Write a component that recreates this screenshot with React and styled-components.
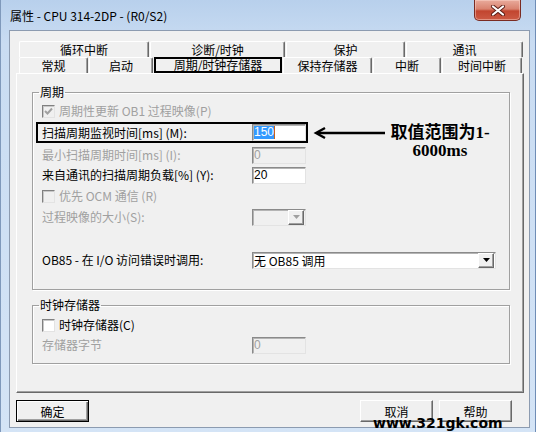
import React from 'react';
import styled, { createGlobalStyle } from 'styled-components';

const UI_FONT = `"Noto Sans CJK SC", "Liberation Sans", sans-serif`;

const GlobalStyle = createGlobalStyle`
  html, body {
    margin: 0;
    padding: 0;
    background: #fff;
  }
  * {
    box-sizing: border-box;
  }
`;

const Window = styled.div`
  position: relative;
  width: 536px;
  height: 432px;
  display: flex;
  flex-direction: column;
  background: linear-gradient(180deg, #b8d0ec 0%, #c9dcf2 10%, #d4e4f6 100%);
  border-left: 1px solid #7f99bb;
  border-right: 1px solid #6f8db6;
  overflow: hidden;
  font-family: ${UI_FONT};
  font-size: 12px;
  color: #000;
`;

const TitleBar = styled.div`
  height: 30px;
  flex: none;
  display: flex;
  align-items: flex-start;
  padding-left: 9px;
`;

const TitleText = styled.div`
  margin-top: 8px;
  line-height: 16px;
  font-size: 12px;
  white-space: nowrap;
`;

const CloseButton = styled.div`
  margin-left: auto;
  margin-right: 14px;
  width: 47px;
  height: 21px;
  display: flex;
  align-items: center;
  justify-content: center;
  border: 1px solid #7a2b22;
  border-top: none;
  border-radius: 0 0 5px 5px;
  background: linear-gradient(180deg, #e9ab9c 0%, #d9826f 45%, #c2452f 55%, #cc5a44 100%);
  box-shadow: inset 0 0 0 1px rgba(255, 220, 210, 0.45);
`;

const Client = styled.div`
  flex: 1;
  margin: 0 5px 4px 8px;
  border: 1px solid #8c9bb0;
  background: #f0f0f0;
  display: flex;
  flex-direction: column;
`;

const TabStrip = styled.div`
  margin: 10px 0 0 9px;
`;

const TabRow = styled.div`
  display: flex;
  gap: 1px;
  height: 16px;
`;

const Tab = styled.div`
  width: ${(p) => p.$w}px;
  height: 16px;
  flex: none;
  display: flex;
  align-items: center;
  justify-content: center;
  line-height: 14px;
  white-space: nowrap;
  border-top: 1px solid #fff;
  border-left: 1px solid #fff;
  border-right: 1px solid #696969;
  border-top-left-radius: 2px;
  border-top-right-radius: 2px;
  box-shadow: inset -1px 0 0 #a0a0a0;
  ${(p) =>
    p.$active &&
    `
    border: 2px solid #000;
    border-radius: 0;
    box-shadow: none;
  `}
`;

const Panel = styled.div`
  margin-left: 6px;
  width: 508px;
  height: 320px;
  flex: none;
  border-top: 1px solid #fff;
  border-left: 1px solid #fff;
  border-right: 1px solid #696969;
  border-bottom: 1px solid #696969;
  box-shadow: inset -1px -1px 0 #a0a0a0;
`;

const Group = styled.fieldset`
  margin: ${(p) => p.$top}px 13px 0 15px;
  padding: 0 0 ${(p) => p.$bottom}px 0;
  min-width: 0;
  border: 1px solid #a0a0a0;
  box-shadow: inset 1px 1px 0 #fff, 1px 1px 0 #fff;
`;

const Legend = styled.legend`
  margin-left: 6px;
  padding: 0 1px;
  line-height: 14px;
  font-size: 12px;
`;

const GroupBody = styled.div`
  padding-left: 9px;
`;

const Row = styled.div`
  display: flex;
  align-items: center;
  height: ${(p) => p.$h || 20}px;
  margin-top: ${(p) => p.$top || 0}px;
  color: ${(p) => (p.$disabled ? '#a0a0a0' : '#000')};
  line-height: 14px;
  white-space: nowrap;
`;

const FocusRow = styled(Row)`
  width: 272px;
  margin-left: -6px;
  padding-left: 4px;
  border: 2px solid #000;
`;

const Label = styled.span`
  width: 210px;
  flex: none;
`;

const Box = styled.span`
  width: 13px;
  height: 13px;
  flex: none;
  margin-right: 4px;
  display: flex;
  align-items: center;
  justify-content: center;
  background: ${(p) => (p.$disabled ? '#f0f0f0' : '#fff')};
  border: 1px solid;
  border-color: #808080 #e3e3e3 #e3e3e3 #808080;
  box-shadow: inset 1px 1px 0 #c8c8c8;
`;

const Field = styled.div`
  width: ${(p) => p.$w || 54}px;
  height: 17px;
  flex: none;
  display: flex;
  align-items: center;
  padding-left: 1px;
  background: ${(p) => (p.$disabled ? '#f0f0f0' : '#fff')};
  border: 1px solid;
  border-color: #8a8a8a #e3e3e3 #e3e3e3 #8a8a8a;
  box-shadow: inset 1px 1px 0 #b4b4b4;
  color: ${(p) => (p.$disabled ? '#a0a0a0' : '#000')};
  font-family: "Liberation Sans", sans-serif;
  font-size: 12px;
  line-height: 13px;
`;

const Selected = styled.span`
  background: #3399ff;
  color: #fff;
`;

const Caret = styled.span`
  width: 1px;
  height: 13px;
  background: #c8621a;
`;

const ComboText = styled.span`
  flex: 1;
  font-family: ${UI_FONT};
  white-space: nowrap;
`;

const DropButton = styled.span`
  width: 16px;
  height: 15px;
  flex: none;
  display: flex;
  align-items: center;
  justify-content: center;
  background: #f0f0f0;
  border: 1px solid;
  border-color: #fff #696969 #696969 #fff;
  box-shadow: inset -1px -1px 0 #a0a0a0;
`;

const ButtonBar = styled.div`
  display: flex;
  gap: 6px;
  margin-top: 7px;
  padding: 0 17px 0 6px;
`;

const Button = styled.div`
  width: 73px;
  height: 22px;
  display: flex;
  align-items: center;
  justify-content: center;
  margin-left: ${(p) => (p.$push ? 'auto' : '0')};
  background: #f0f0f0;
  border: 1px solid;
  border-color: #fff #696969 #696969 #fff;
  box-shadow: inset -1px -1px 0 #a0a0a0;
  ${(p) =>
    p.$default &&
    `
    border: 1px solid #000;
    box-shadow: inset 1px 1px 0 #fff, inset -1px -1px 0 #696969, inset -2px -2px 0 #a0a0a0;
  `}
`;

const Arrow = styled.svg`
  position: absolute;
  left: 312px;
  top: 125px;
`;

const Note = styled.div`
  position: absolute;
  left: 386px;
  top: 124px;
  width: 106px;
  text-align: center;
  font-family: "Liberation Serif", "Noto Sans CJK SC", serif;
  font-weight: bold;
  font-size: 17px;
  line-height: 18px;
`;

const Watermark = styled.div`
  position: absolute;
  left: 372px;
  top: 415px;
  font-family: "DejaVu Sans", sans-serif;
  font-weight: bold;
  font-size: 14px;
  line-height: 16px;
  color: #000;
`;

const row1 = [
  ['循环中断', 130],
  ['诊断/时钟', 135],
  ['保护', 119],
  ['通讯', 117],
];

const row2 = [
  ['常规', 69],
  ['启动', 64],
  ['周期/时钟存储器', 128, true],
  ['保持存储器', 89],
  ['中断', 68],
  ['时间中断', 80],
];

function Check({ checked, disabled }) {
  return (
    <Box $disabled={disabled}>
      {checked && (
        <svg width="9" height="9" viewBox="0 0 9 9">
          <path d="M1 4 L3.5 6.5 L8 1.5" fill="none" stroke={disabled ? '#a0a0a0' : '#000'} strokeWidth="2" />
        </svg>
      )}
    </Box>
  );
}

function Combo({ w, text, disabled }) {
  return (
    <Field $w={w} $disabled={disabled} style={{ paddingRight: 1 }}>
      <ComboText>{text}</ComboText>
      <DropButton>
        <svg width="7" height="4" viewBox="0 0 7 4">
          <polygon points="0,0 7,0 3.5,4" fill={disabled ? '#a0a0a0' : '#000'} />
        </svg>
      </DropButton>
    </Field>
  );
}

export default function App() {
  return (
    <>
      <GlobalStyle />
      <Window>
        <TitleBar>
          <TitleText>属性 - CPU 314-2DP - (R0/S2)</TitleText>
          <CloseButton>
            <svg width="16" height="11" viewBox="0 0 16 11">
              <path d="M3 1.5 L13 9.5 M13 1.5 L3 9.5" stroke="#5a1c14" strokeWidth="4" strokeLinecap="round" />
              <path d="M3 1.5 L13 9.5 M13 1.5 L3 9.5" stroke="#fff" strokeWidth="2.2" strokeLinecap="round" />
            </svg>
          </CloseButton>
        </TitleBar>

        <Client>
          <TabStrip>
            <TabRow>
              {row1.map(([t, w]) => (
                <Tab key={t} $w={w}>{t}</Tab>
              ))}
            </TabRow>
            <TabRow>
              {row2.map(([t, w, a]) => (
                <Tab key={t} $w={w} $active={a}>{t}</Tab>
              ))}
            </TabRow>
          </TabStrip>

          <Panel>
            <Group $top={11} $bottom={19}>
              <Legend>周期</Legend>
              <GroupBody>
                <Row $top={3} $h={18} $disabled>
                  <Check checked disabled />
                  周期性更新 OB1 过程映像(P)
                </Row>
                <FocusRow $top={2} $h={21}>
                  <Label>扫描周期监视时间[ms] (M):</Label>
                  <Field>
                    <Selected>150</Selected>
                    <Caret />
                  </Field>
                </FocusRow>
                <Row $top={2} $disabled>
                  <Label>最小扫描周期时间[ms] (I):</Label>
                  <Field $disabled>0</Field>
                </Row>
                <Row>
                  <Label>来自通讯的扫描周期负载[%] (Y):</Label>
                  <Field>20</Field>
                </Row>
                <Row $top={1} $disabled>
                  <Check disabled />
                  优先 OCM 通信 (R)
                </Row>
                <Row $top={1} $disabled>
                  <Label>过程映像的大小(S):</Label>
                  <Combo w={54} disabled />
                </Row>
                <Row $top={23}>
                  <Label>OB85 - 在 I/O 访问错误时调用:</Label>
                  <Combo w={244} text="无 OB85 调用" />
                </Row>
              </GroupBody>
            </Group>

            <Group $top={8} $bottom={8}>
              <Legend>时钟存储器</Legend>
              <GroupBody>
                <Row $top={4} $h={18}>
                  <Check />
                  时钟存储器(C)
                </Row>
                <Row $top={1} $disabled>
                  <Label>存储器字节</Label>
                  <Field $disabled>0</Field>
                </Row>
              </GroupBody>
            </Group>
          </Panel>

          <ButtonBar>
            <Button $default>确定</Button>
            <Button $push>取消</Button>
            <Button>帮助</Button>
          </ButtonBar>
        </Client>

        <Arrow width="74" height="16" viewBox="0 0 74 16">
          <path d="M12 3 L3 8 L12 13" fill="none" stroke="#000" strokeWidth="2.4" />
          <path d="M4 8 L72 8" stroke="#000" strokeWidth="2.4" />
        </Arrow>
        <Note>
          取值范围为1-
          <br />
          6000ms
        </Note>
        <Watermark>www.321gk.com</Watermark>
      </Window>
    </>
  );
}
